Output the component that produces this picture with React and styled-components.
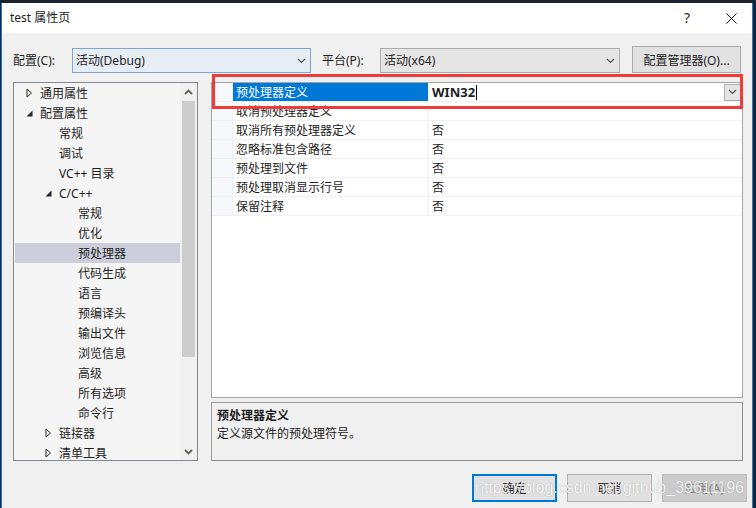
import styled, { createGlobalStyle } from "styled-components";

const GlobalStyle = createGlobalStyle`
  html, body {
    margin: 0;
    padding: 0;
    background: #1d2430;
  }
  * {
    box-sizing: border-box;
  }
`;

const FONT = `"Noto Sans", "Noto Sans CJK SC", sans-serif`;

const Page = styled.div`
  width: 756px;
  height: 508px;
  padding: 3px 0 0 1px;
  overflow: hidden;
  font-family: ${FONT};
  font-size: 12px;
  color: #1e1e1e;
`;

const Window = styled.div`
  width: 752px;
  height: 505px;
  background: #f0f0f0;
  border-left: 1px solid #1a7fd4;
  border-right: 1px solid #1a7fd4;
  display: flex;
  flex-direction: column;
`;

const TitleBar = styled.div`
  height: 30px;
  background: #ffffff;
  display: flex;
  align-items: center;
  padding: 0 15px 0 8px;
`;

const Title = styled.div`
  flex: 1;
  font-size: 12px;
  line-height: 16px;
`;

const HelpMark = styled.div`
  width: 20px;
  margin-right: 29px;
  text-align: center;
  font-size: 14px;
  line-height: 16px;
`;

const Body = styled.div`
  flex: 1;
  display: flex;
  flex-direction: column;
  padding: 0 8px 0 11px;
`;

const ConfigRow = styled.div`
  height: 27px;
  margin-top: 13px;
  display: flex;
  align-items: flex-end;
`;

const FieldLabel = styled.div`
  width: ${({ $w }) => $w}px;
  margin-left: ${({ $ml }) => $ml || 0}px;
  height: 25px;
  line-height: 25px;
  white-space: nowrap;
`;

const Select = styled.div`
  width: ${({ $w }) => $w}px;
  height: 25px;
  display: flex;
  align-items: center;
  padding: 0 4px 0 3px;
  background: ${({ $focus }) => ($focus ? "#e6edf5" : "#e5e5e5")};
  border: 1px solid ${({ $focus }) => ($focus ? "#7ea6cf" : "#adadad")};
`;

const SelectText = styled.div`
  flex: 1;
  line-height: 16px;
`;

const PushButton = styled.div`
  width: ${({ $w }) => $w}px;
  height: ${({ $h }) => $h || 28}px;
  margin-left: ${({ $ml }) => $ml || 0}px;
  display: flex;
  align-items: center;
  justify-content: center;
  background: ${({ $disabled }) => ($disabled ? "#cccccc" : "#e1e1e1")};
  border: ${({ $primary, $disabled }) =>
    $primary ? "2px solid #0078d7" : $disabled ? "1px solid #bfbfbf" : "1px solid #adadad"};
  color: ${({ $disabled }) => ($disabled ? "#838383" : "#1e1e1e")};
  white-space: nowrap;
`;

const Main = styled.div`
  margin-top: 9px;
  height: 379px;
  display: flex;
  gap: 13px;
`;

const TreePanel = styled.div`
  width: 185px;
  height: 379px;
  border: 1px solid #828790;
  background: #f5f5f5;
  display: flex;
`;

const TreeList = styled.div`
  flex: 1;
  overflow: hidden;
`;

const TreeRow = styled.div`
  height: 20px;
  display: flex;
  align-items: center;
  padding-left: ${({ $level }) => 11 + 19 * $level}px;
  margin-left: 1px;
  background: ${({ $selected }) => ($selected ? "#cccedb" : "transparent")};
  white-space: nowrap;
`;

const ArrowSlot = styled.div`
  width: 14px;
  height: 20px;
  display: flex;
  align-items: center;
`;

const ScrollBar = styled.div`
  width: 17px;
  background: #f0f0f0;
  display: flex;
  flex-direction: column;
`;

const ScrollArrow = styled.div`
  height: 17px;
  display: flex;
  align-items: center;
  justify-content: center;
`;

const ScrollTrack = styled.div`
  flex: 1;
  padding: 1px 2px 0 2px;
`;

const ScrollThumb = styled.div`
  height: 256px;
  background: #cdcdcd;
`;

const RightCol = styled.div`
  position: relative;
  width: 532px;
  display: flex;
  flex-direction: column;
  gap: 4px;
`;

const GridPanel = styled.div`
  height: 316px;
  background: #ffffff;
  border: 1px solid #a5a5a5;
`;

const GridRow = styled.div`
  height: 19px;
  display: grid;
  grid-template-columns: 21px 196px 1fr;
  border-bottom: 1px solid #f0f0f5;
`;

const Gutter = styled.div`
  background: #f7f8fb;
  border-right: 1px solid #eeeff4;
`;

const NameCell = styled.div`
  display: flex;
  align-items: center;
  padding-left: 3px;
  background: ${({ $active }) => ($active ? "#0078d7" : "transparent")};
  color: ${({ $active }) => ($active ? "#ffffff" : "#1e1e1e")};
  border-right: 1px solid #f0f0f5;
  white-space: nowrap;
  overflow: hidden;
`;

const ValueCell = styled.div`
  display: flex;
  align-items: center;
  padding-left: 3px;
`;

const EditText = styled.div`
  flex: 1;
  display: flex;
  align-items: center;
  font-weight: 700;
  font-size: 13px;
`;

const Caret = styled.span`
  width: 1px;
  height: 15px;
  margin-left: 1px;
  background: #000;
`;

const DropButton = styled.div`
  width: 17px;
  height: 17px;
  margin-right: 1px;
  display: flex;
  align-items: center;
  justify-content: center;
  background: #e5e5e5;
  border: 1px solid #adadad;
`;

const Highlight = styled.div`
  position: absolute;
  left: 1px;
  top: -8px;
  width: 531px;
  height: 35px;
  border: 3px solid #f23a3a;
  pointer-events: none;
`;

const DescPanel = styled.div`
  height: 59px;
  border: 1px solid #a0a0a0;
  border-right-color: #8c8c8c;
  border-bottom-color: #8c8c8c;
  padding: 4px 5px;
  line-height: 18px;
`;

const DescTitle = styled.div`
  font-weight: 700;
`;

const ButtonRow = styled.div`
  position: relative;
  margin-top: 13px;
  margin-right: -3px;
  display: flex;
  justify-content: flex-end;
  gap: 10px;
`;

const Watermark = styled.div`
  position: absolute;
  left: 462px;
  top: 4px;
  font-family: "Liberation Sans", Arial, sans-serif;
  font-size: 16px;
  line-height: 20px;
  color: rgba(255, 255, 255, 0.88);
  text-shadow: 0 0 1px rgba(0, 0, 0, 0.3);
  pointer-events: none;
  white-space: nowrap;
`;

const Chevron = ({ up }) => (
  <svg width="9" height="6" viewBox="0 0 9 6">
    <path
      d={up ? "M1 5L4.5 1.5L8 5" : "M1 1L4.5 4.5L8 1"}
      fill="none"
      stroke="#555"
      strokeWidth="1.2"
    />
  </svg>
);

const BoldChevron = ({ up }) => (
  <svg width="9" height="6" viewBox="0 0 9 6">
    <path
      d={up ? "M1 5L4.5 1.5L8 5" : "M1 1L4.5 4.5L8 1"}
      fill="none"
      stroke="#606060"
      strokeWidth="1.8"
    />
  </svg>
);

const TreeArrow = ({ open }) =>
  open ? (
    <svg width="7" height="7" viewBox="0 0 7 7">
      <path d="M6.5 0.5V6.5H0.5Z" fill="#262626" />
    </svg>
  ) : (
    <svg width="7" height="10" viewBox="0 0 7 10">
      <path d="M1 1L5.5 5L1 9Z" fill="none" stroke="#262626" strokeWidth="1" />
    </svg>
  );

const CloseIcon = () => (
  <svg width="11" height="11" viewBox="0 0 11 11">
    <path d="M0.5 0.5L10.5 10.5M10.5 0.5L0.5 10.5" stroke="#111" strokeWidth="1" />
  </svg>
);

const tree = [
  { label: "通用属性", level: 0, arrow: "closed" },
  { label: "配置属性", level: 0, arrow: "open" },
  { label: "常规", level: 1 },
  { label: "调试", level: 1 },
  { label: "VC++ 目录", level: 1 },
  { label: "C/C++", level: 1, arrow: "open" },
  { label: "常规", level: 2 },
  { label: "优化", level: 2 },
  { label: "预处理器", level: 2, selected: true },
  { label: "代码生成", level: 2 },
  { label: "语言", level: 2 },
  { label: "预编译头", level: 2 },
  { label: "输出文件", level: 2 },
  { label: "浏览信息", level: 2 },
  { label: "高级", level: 2 },
  { label: "所有选项", level: 2 },
  { label: "命令行", level: 2 },
  { label: "链接器", level: 1, arrow: "closed" },
  { label: "清单工具", level: 1, arrow: "closed" },
];

const props = [
  ["取消预处理器定义", ""],
  ["取消所有预处理器定义", "否"],
  ["忽略标准包含路径", "否"],
  ["预处理到文件", "否"],
  ["预处理取消显示行号", "否"],
  ["保留注释", "否"],
];

export default function App() {
  return (
    <Page>
      <GlobalStyle />
      <Window>
        <TitleBar>
          <Title>test 属性页</Title>
          <HelpMark>?</HelpMark>
          <CloseIcon />
        </TitleBar>
        <Body>
          <ConfigRow>
            <FieldLabel $w={59}>配置(C):</FieldLabel>
            <Select $w={239} $focus>
              <SelectText>活动(Debug)</SelectText>
              <Chevron />
            </Select>
            <FieldLabel $w={58} $ml={11}>平台(P):</FieldLabel>
            <Select $w={240}>
              <SelectText>活动(x64)</SelectText>
              <Chevron />
            </Select>
            <PushButton $w={109} $h={27} $ml={12}>
              配置管理器(O)...
            </PushButton>
          </ConfigRow>
          <Main>
            <TreePanel>
              <TreeList>
                {tree.map((item, i) => (
                  <TreeRow key={i} $level={item.level} $selected={item.selected}>
                    {item.arrow ? (
                      <ArrowSlot>
                        <TreeArrow open={item.arrow === "open"} />
                      </ArrowSlot>
                    ) : (
                      <ArrowSlot />
                    )}
                    {item.label}
                  </TreeRow>
                ))}
              </TreeList>
              <ScrollBar>
                <ScrollArrow>
                  <BoldChevron up />
                </ScrollArrow>
                <ScrollTrack>
                  <ScrollThumb />
                </ScrollTrack>
                <ScrollArrow>
                  <BoldChevron />
                </ScrollArrow>
              </ScrollBar>
            </TreePanel>
            <RightCol>
              <GridPanel>
                <GridRow>
                  <Gutter />
                  <NameCell $active>预处理器定义</NameCell>
                  <ValueCell>
                    <EditText>
                      WIN32
                      <Caret />
                    </EditText>
                    <DropButton>
                      <Chevron />
                    </DropButton>
                  </ValueCell>
                </GridRow>
                {props.map(([name, value]) => (
                  <GridRow key={name}>
                    <Gutter />
                    <NameCell>{name}</NameCell>
                    <ValueCell>{value}</ValueCell>
                  </GridRow>
                ))}
              </GridPanel>
              <DescPanel>
                <DescTitle>预处理器定义</DescTitle>
                <div>定义源文件的预处理符号。</div>
              </DescPanel>
              <Highlight />
            </RightCol>
          </Main>
          <ButtonRow>
            <PushButton $w={85} $primary>确定</PushButton>
            <PushButton $w={85}>取消</PushButton>
            <PushButton $w={85} $disabled>应用(A)</PushButton>
            <Watermark>https://blog.csdn.net/github_39611196</Watermark>
          </ButtonRow>
        </Body>
      </Window>
    </Page>
  );
}
